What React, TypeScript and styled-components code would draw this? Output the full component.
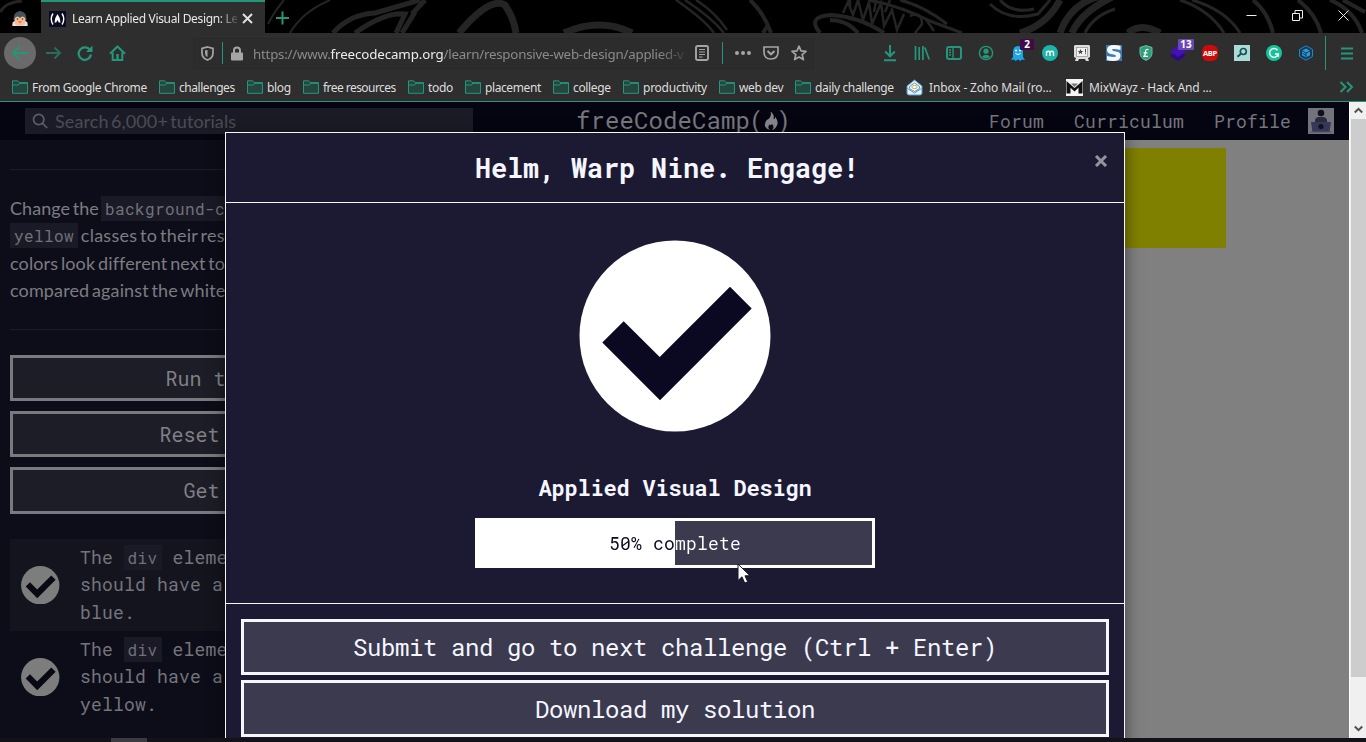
import React from "react";
import styled, { createGlobalStyle, css } from "styled-components";

const TEAL = "#25967a";
const MONO = `"Roboto Mono", "DejaVu Sans Mono", monospace`;
const UI = `"Noto Sans", "Open Sans", sans-serif`;

const GlobalStyle = createGlobalStyle`
  *, *::before, *::after { box-sizing: border-box; }
  html, body { margin: 0; padding: 0; background: #111; }
  body { overflow: hidden; }
`;

/* Monospace text set at a size and a whole-pixel character advance. */
const mono = (size: number, advance: number) => css`
  font-family: ${MONO};
  font-size: ${size}px;
  letter-spacing: ${(advance - size * 0.6001).toFixed(3)}px;
  white-space: pre;
`;

const Window = styled.div`
  width: 1366px;
  height: 742px;
  display: flex;
  flex-direction: column;
  overflow: hidden;
  background: #131217;
`;

/* ---------- title bar ---------- */
const TitleBar = styled.header`
  position: relative;
  flex: none;
  height: 33px;
  display: flex;
  background: #000;
  overflow: hidden;
  font-family: ${UI};
`;
const Doodle = styled.svg`
  position: absolute;
  inset: 0;
`;
const PinnedTab = styled.div`
  position: relative;
  width: 41px;
  padding: 10px 0 0 12px;
`;
const Tab = styled.div`
  position: relative;
  width: 224px;
  display: flex;
  align-items: center;
  padding: 2px 0 0 8px;
  background: #2e2e2e;
  border-top: 2px solid ${TEAL};
`;
const TabTitle = styled.span`
  width: 165px;
  margin: 0 5px 0 6px;
  white-space: nowrap;
  font-size: 12px;
  letter-spacing: -0.33px;
  color: #e8e8e8;
  mask-image: linear-gradient(90deg, #000 146px, rgba(0, 0, 0, 0.2) 164px);
`;
const NewTab = styled.div`
  position: relative;
  padding: 9px 0 0 10px;
`;
const WindowButtons = styled.div`
  position: relative;
  display: flex;
  margin-left: auto;
`;
const WindowButton = styled.div`
  width: 46px;
  display: flex;
  justify-content: center;
  padding-top: 10px;
`;

/* ---------- toolbar ---------- */
const Toolbar = styled.div`
  flex: none;
  height: 40px;
  display: flex;
  align-items: center;
  background: #2e2e2e;
  font-family: ${UI};
`;
const NavCell = styled.div<{ $w?: number; $round?: boolean }>`
  position: relative;
  width: ${(p) => p.$w ?? 32}px;
  height: 32px;
  flex: none;
  display: flex;
  align-items: center;
  justify-content: center;
  border-radius: ${(p) => (p.$round ? "50%" : "0")};
  background: ${(p) => (p.$round ? "#6a6a6a" : "transparent")};
`;
const UrlBar = styled.div`
  width: 621px;
  height: 31px;
  flex: none;
  display: flex;
  align-items: center;
  margin: 0 60px 0 58px;
  padding-left: 7px;
  border: 1px solid #292929;
  background: #2c2c2c;
`;
const Divider = styled.i<{ $h?: number; $m?: string }>`
  width: 1px;
  height: ${(p) => p.$h ?? 22}px;
  margin: ${(p) => p.$m ?? "0"};
  background: ${TEAL};
`;
const Url = styled.span`
  width: 432px;
  margin: 2px 10px 0 10px;
  white-space: nowrap;
  font-size: 13.3px;
  letter-spacing: -0.22px;
  color: #8b8b8b;
  mask-image: linear-gradient(90deg, #000 405px, rgba(0, 0, 0, 0.2) 432px);
  b {
    font-weight: 400;
    letter-spacing: -0.1px;
    color: #ececec;
  }
`;
const Badge = styled.span<{ $bg: string; $w: number }>`
  position: absolute;
  top: 2px;
  left: ${(p) => 32 - p.$w}px;
  width: ${(p) => p.$w}px;
  height: 11px;
  border-radius: 1px;
  background: ${(p) => p.$bg};
  color: #fff;
  font: 700 10px/11px ${UI};
  text-align: center;
`;

/* ---------- bookmarks ---------- */
const Bookmarks = styled.nav`
  flex: none;
  height: 29px;
  display: flex;
  align-items: center;
  padding: 0 0 0 12px;
  background: #2e2e2e;
  border-bottom: 1px solid ${TEAL};
  font: 12px ${UI};
  color: #dedede;
`;
const Bookmark = styled.span<{ $w: number; $gap: number; $ls: number }>`
  width: ${(p) => p.$w}px;
  flex: none;
  display: flex;
  align-items: center;
  gap: ${(p) => p.$gap}px;
  white-space: nowrap;
  letter-spacing: ${(p) => p.$ls}px;
`;
const Overflow = styled.span`
  margin-left: auto;
  padding-right: 12px;
  display: flex;
`;

/* ---------- page ---------- */
const Viewport = styled.div`
  flex: none;
  height: 636px;
  display: flex;
`;
const Page = styled.main`
  position: relative;
  width: 1349px;
  overflow: hidden;
  display: flex;
  flex-direction: column;
  background: #0d0d19;
`;
const SiteNav = styled.div`
  flex: none;
  height: 38px;
  display: flex;
  align-items: flex-start;
  padding: 6px 15px 0 25px;
  background: #050511;
  color: #76767d;
`;
const Search = styled.div`
  width: 448px;
  height: 26px;
  display: flex;
  align-items: center;
  gap: 7px;
  padding-left: 7px;
  background: #1b1b27;
  font: 18px Lato, sans-serif;
  color: #4b4b53;
  span {
    letter-spacing: 0.12px;
    word-spacing: -2.5px;
    margin-bottom: 1px;
  }
`;
const Logo = styled.div`
  display: flex;
  margin: -2px 0 0 103px;
  ${mono(24, 14.5)}
  line-height: 28px;
  color: #77777d;
`;
const LogoMark = styled.span`
  display: flex;
  width: 42px;
  margin-left: -1px;
  svg {
    margin: 5px -3px 0 -2px;
  }
`;
const NavLinks = styled.div`
  display: flex;
  gap: 30px;
  margin-left: auto;
  ${mono(18, 11)}
  line-height: 27px;
`;
const Avatar = styled.svg`
  margin-left: 17px;
`;
const Split = styled.div`
  flex: 1;
  display: flex;
  min-height: 0;
`;
const Lesson = styled.section`
  width: 478px;
  padding: 29px 0 0 10px;
`;
const Rule = styled.div`
  height: 1px;
  background: #1c1c28;
`;
const Instructions = styled.div`
  height: 159px;
  padding-top: 25px;
  font: 18px/27.4px Lato, sans-serif;
  letter-spacing: 0.13px;
  word-spacing: -2px;
  color: #7c7c81;
`;
const Line = styled.div<{ $ls?: number }>`
  height: 27.4px;
  white-space: nowrap;
  letter-spacing: ${(p) => p.$ls ?? 0.13}px;
`;
const Code = styled.code<{ $ml?: number }>`
  ${mono(16, 10)}
  display: inline-block;
  height: 25px;
  line-height: 25px;
  margin-left: ${(p) => p.$ml ?? 0}px;
  padding: 0 4px;
  background: #1a1a26;
  color: #717179;
  vertical-align: baseline;
`;
const Buttons = styled.div`
  display: flex;
  flex-direction: column;
  gap: 10px;
  padding: 25px 0;
`;
const LessonButton = styled.button<{ $h?: number }>`
  height: ${(p) => p.$h ?? 46}px;
  padding: 0 1px ${(p) => (p.$h ? 2 : 0)}px 0;
  border: 3px solid #79797f;
  border-radius: 0;
  background: #1d1d28;
  color: #808086;
  ${mono(20, 12)}
`;
const TestRow = styled.div<{ $tint?: boolean }>`
  height: 92px;
  display: flex;
  align-items: center;
  gap: 20.5px;
  padding: 0 0 0 11px;
  background: ${(p) => (p.$tint ? "#14141f" : "transparent")};
  ${mono(18, 11)}
  line-height: 27.5px;
  color: #75757b;
  svg {
    flex: none;
  }
`;
const Preview = styled.section`
  flex: 1;
  padding: 8px 0 0 548px;
  background: #808080;
`;
const YellowBox = styled.div`
  width: 200px;
  height: 100px;
  background: #808000;
`;

/* ---------- modal ---------- */
const Modal = styled.div`
  position: absolute;
  top: 30px;
  left: 225px;
  width: 900px;
  height: 640px;
  display: flex;
  flex-direction: column;
  background: #1c1a32;
  border: 1px solid #f5f5fa;
  box-shadow: 0 5px 15px rgba(0, 0, 0, 0.5);
  color: #f5f6ff;
`;
const ModalHeader = styled.div`
  height: 70px;
  display: flex;
  align-items: center;
  padding: 0 16px 0 249px;
  border-bottom: 1px solid #f5f5fa;
`;
const Title = styled.h2`
  margin: 0;
  ${mono(27, 16)}
  line-height: 36px;
  font-weight: 700;
`;
const Close = styled.div`
  display: flex;
  margin: -13px 0 0 auto;
`;
const ModalBody = styled.div`
  height: 401px;
  display: flex;
  flex-direction: column;
  align-items: center;
  padding-top: 37px;
  border-bottom: 1px solid #f5f5fa;
`;
const BlockName = styled.div`
  margin: 39px 0 13px;
  ${mono(22, 13)}
  line-height: 34px;
  font-weight: 700;
`;
const Progress = styled.div<{ $value: number }>`
  width: 400px;
  height: 50px;
  border: 3px solid #fff;
  padding-top: 1px;
  background: linear-gradient(90deg, #fff ${(p) => p.$value}%, #3b3a4f ${(p) => p.$value}%);
`;
const ProgressLabel = styled.div<{ $value: number }>`
  ${mono(18, 11)}
  line-height: 43px;
  text-align: center;
  color: transparent;
  background: linear-gradient(90deg, #0a0a23 ${(p) => p.$value}%, #fff ${(p) => p.$value}%);
  -webkit-background-clip: text;
  background-clip: text;
`;
const ModalFooter = styled.div`
  display: flex;
  flex-direction: column;
  gap: 5px;
  padding: 15px;
`;
const ModalButton = styled.button<{ $h: number }>`
  height: ${(p) => p.$h}px;
  padding: 0;
  border: 3px solid #f5f6ff;
  border-radius: 0;
  background: #3b3a4f;
  color: #f5f6ff;
  ${mono(24, 14)}
`;
const Pointer = styled.svg`
  position: absolute;
  left: 737px;
  top: 461px;
`;

/* ---------- scrollbar ---------- */
const ScrollBar = styled.div`
  width: 17px;
  display: flex;
  flex-direction: column;
  align-items: center;
  background: #f0f0f0;
  border-left: 1px solid #fff;
`;
const ScrollArrow = styled.div`
  height: 17px;
  display: flex;
  align-items: center;
`;
const Thumb = styled.div`
  width: 15px;
  height: 558px;
  margin-bottom: 43px;
  background: #cdcdcd;
`;
const TaskEdge = styled.div`
  flex: 1;
  padding-left: 111px;
  i {
    display: block;
    width: 36px;
    height: 4px;
    background: #3a3a3f;
  }
`;

const Passed = ({ size, disc, tick }: { size: number; disc: string; tick: string }) => (
  <svg width={size} height={size} viewBox="0 0 192 192">
    <circle cx="96" cy="96" r="95.5" fill={disc} />
    <path d="M23.3 102.6 44.7 81.3 80.7 117 151 46.8 172.7 68.4 81 160.3Z" fill={tick} />
  </svg>
);

const Folder = () => (
  <svg width="16" height="14" viewBox="0 0 16 14" fill="#24463f" stroke={TEAL}>
    <path d="M.5 13.3V.8h5.2l1.4 1.8h8.4v10.7Z" />
    <path d="M.5 5h6l1.2-1.5" fill="none" />
    <path d="M7 3.3h8.5" fill="none" />
  </svg>
);

const ZohoIcon = () => (
  <svg width="17" height="17" viewBox="0 0 17 17">
    <path d="M1 7 8.5 1 16 7v7q0 2-2 2H3q-2 0-2-2Z" fill="#e9f2f8" stroke="#4f9bc9" />
    <path d="M3.5 7.5 8.5 4l5 3.5v2l-5 3-5-3Z" fill="#fff" stroke="#4f9bc9" />
    <ellipse cx="8.5" cy="8" rx="2.7" ry="1.6" fill="none" stroke="#e0a33b" />
    <path d="m1.5 9.5 7 4.5 7-4.5" fill="none" stroke="#4f9bc9" />
  </svg>
);

const MixIcon = () => (
  <svg width="17" height="17" viewBox="0 0 17 17">
    <path d="M0 0h17v17H0Z" fill="#f4f4f4" />
    <path d="M.5 2 8.5 9l8-7v12.5h-4V8.7l-4 3.8-4-3.8v5.8h-4Z" fill="#111" />
    <path d="M5 4.5h7L8.5 8Z" fill="#777" />
  </svg>
);

const folders: [string, number, number][] = [
  ["From Google Chrome", 147, -0.35],
  ["challenges", 88, -0.45],
  ["blog", 56, -0.35],
  ["free resources", 105, -0.55],
  ["todo", 57, -0.35],
  ["placement", 88, -0.4],
  ["college", 70, -0.35],
  ["productivity", 96, -0.25],
  ["web dev", 76, -0.35],
  ["daily challenge", 111, -0.35],
];

const TitleDoodle = () => (
  <Doodle width="1366" height="33" viewBox="0 0 1366 33" fill="none" stroke="#242424">
    <path d="M0 12Q6 2 22 1" strokeWidth="3" />
    <path d="M333 33Q350 14 375 13L420 0M355 33Q385 12 405 14L396 33M415 12 402 33M425 0 412 14" strokeWidth="5" />
    <path d="M268 24q6-12 16-24M290 33Q302 12 330 0" strokeWidth="2" />
    <path d="M459 33Q490-4 505 5 514 18 516 33" strokeWidth="7" />
    <path d="M564 33Q600 17 632 33" strokeWidth="7" />
    <path d="M676 0Q705 20 714 33M685 0Q712 18 724 33M696 0Q715 12 727 30" strokeWidth="2.5" />
    <path d="M750 0Q764 13 771 33M763 33l5-8" strokeWidth="4" />
    <path d="M820 33Q806 16 832 15 860 17 884 33M830 20q17 0 28 13" strokeWidth="4" />
    <path d="M843 13 848 2 853 15 858 0 863 20 869 2 872 24 881 3 884 26 892 10 897 30 904 14M850 0v9M876 0l-2 12M890 0l-5 12M910 16q12-5 12 8l-7 9M925 18l9 13" strokeWidth="2.5" />
    <path d="M868 0Q898 5 930 21L962 33M900 0q24 6 47 24" strokeWidth="3" />
    <path d="M990 4Q1008 22 1038 14L1050 0M1000 0q12 14 34 9" strokeWidth="3" />
    <path d="M1020 33Q1047 25 1060 0M1060 33Q1070 4 1100-4M1072 33Q1080 13 1112-3" strokeWidth="7" />
    <path d="M1085 33Q1093 16 1115 9M1192 0q34 10 48 33M1180 0q30 10 44 33" strokeWidth="3" />
    <path d="M1128 33Q1141 22 1160 33" strokeWidth="7" />
    <path d="M1253 0Q1268 12 1273 33M1298 0Q1316 14 1321 33M1330 0q24 10 32 33M1343 0l22 12" strokeWidth="4" />
  </Doodle>
);

const stroke = { fill: "none", stroke: TEAL, strokeWidth: 2 };

const AbpDisc = styled.span`
  width: 16px;
  height: 16px;
  border-radius: 6px;
  background: #d00a0a;
  color: #fff;
  font: 700 7.5px/16px "Open Sans", sans-serif;
  letter-spacing: -0.3px;
  text-align: center;
`;

const Extensions = () => (
  <>
    <NavCell>
      <svg width="16" height="18" viewBox="0 0 16 18" {...stroke}>
        <path d="M8 1v11M3.2 7.5 8 12.3l4.8-4.8M2 16.3h12" />
      </svg>
    </NavCell>
    <NavCell>
      <svg width="16" height="16" viewBox="0 0 16 16" {...stroke}>
        <path d="M1.5 1v14M5.2 2v13M8.9 1v14M10.8 2.5l4.4 12" strokeWidth="1.7" />
      </svg>
    </NavCell>
    <NavCell>
      <svg width="16" height="14" viewBox="0 0 16 14" {...stroke}>
        <rect x="1" y="1" width="14" height="12" rx="2" />
        <path d="M7 1v12M3 4h2M3 6.5h2M3 9h2" strokeWidth="1.3" />
      </svg>
    </NavCell>
    <NavCell>
      <svg width="16" height="16" viewBox="0 0 16 16" {...stroke}>
        <circle cx="8" cy="8" r="6.6" strokeWidth="1.4" />
        <circle cx="8" cy="6.2" r="2.6" fill={TEAL} stroke="none" />
        <path d="M3.8 11.7q4.2-4 8.4 0-4.2 3.6-8.4 0Z" fill={TEAL} stroke="none" />
      </svg>
    </NavCell>
    <NavCell>
      <svg width="16" height="16" viewBox="0 0 16 16">
        <path d="M3 7q0-6 5-6t5 6v5l2 3-3-.5L10.5 16 8 14.5 5.5 16 4 14.5 1 15l2-3Z" fill="#1ea5e4" />
        <circle cx="6" cy="5.5" r="1" fill="#fff" />
        <circle cx="10" cy="5.5" r="1" fill="#fff" />
        <path d="M5.5 8.5q2.5 2 5 0" stroke="#fff" fill="none" />
      </svg>
      <Badge $bg="#3f0a47" $w={14}>2</Badge>
    </NavCell>
    <NavCell>
      <svg width="16" height="16" viewBox="0 0 16 16">
        <circle cx="8" cy="8" r="8" fill="#1cb5a8" />
        <path d="M4.5 11V6.5M4.5 8q0-1.7 1.7-1.7T8 8v3M8 8q0-1.7 1.8-1.7T11.5 8v3" stroke="#fff" strokeWidth="1.4" fill="none" />
      </svg>
    </NavCell>
    <NavCell>
      <svg width="16" height="16" viewBox="0 0 16 16">
        <path d="M1 0h14l1 1v11l-2 1 1 3h-3l-1-2H5l-1 2H1l1-3-2-1V1Z" fill="#dedede" />
        <rect x="2.5" y="2.5" width="11" height="9" fill="#f2f2f2" stroke="#999" strokeWidth=".8" />
        <path d="m6.5 4 .8 2h2l-1.6 1.3.6 2-1.8-1.2-1.8 1.2.6-2L3.7 6h2ZM11 4h1v3.400h-1ZM11 8.300h1v1h-1Z" fill="#444" />
      </svg>
    </NavCell>
    <NavCell>
      <svg width="16" height="16" viewBox="0 0 16 16">
        <path d="M0 0h16v16H0Z" fill="#3d7ab5" />
        <path d="M14.5 1v4Q6 3 6 4.700 6 6 10 6.500q4.500.5 4.500 4.300Q14.500 16 7 16 3 16 1 15v-4q9 2 9 0 0-1.400-4-1.800Q1 8.500 1 5 1 0 8 0q4 0 6.500 1Z" fill="#f5f8fb" />
      </svg>
    </NavCell>
    <NavCell>
      <svg width="14" height="16" viewBox="0 0 14 16">
        <path d="M7 .6 13 2.500V8q0 5-6 7.400Q1 13 1 8V2.500Z" fill="#2e9e7d" stroke="#6fbfa5" />
        <path d="M9.500 4.800Q7 3.500 6.600 6L6 10q-.3 1.200-1.700 1.300H9M4.600 7.800h3.800" stroke="#fff" strokeWidth="1.2" fill="none" />
      </svg>
    </NavCell>
    <NavCell>
      <svg width="16" height="16" viewBox="0 0 16 16">
        <path d="m8 6 8 4.500L8 16 0 10.500Z" fill="#2c0a86" />
        <path d="m8 1 8 5-8 6-8-6Z" fill="#4511b5" />
      </svg>
      <Badge $bg="#6b46b8" $w={16}>13</Badge>
    </NavCell>
    <NavCell>
      <AbpDisc>ABP</AbpDisc>
    </NavCell>
    <NavCell>
      <svg width="16" height="16" viewBox="0 0 16 16">
        <path d="M0 0h16v16H0Z" fill="#a9dcd6" />
        <circle cx="9.3" cy="6.5" r="3" fill="none" stroke="#1c4f5a" strokeWidth="1.7" />
        <path d="m7 8.800-3.500 3" stroke="#1c4f5a" strokeWidth="2" />
      </svg>
    </NavCell>
    <NavCell>
      <svg width="16" height="16" viewBox="0 0 16 16">
        <circle cx="8" cy="8" r="8" fill="#15c39a" />
        <path d="M11.500 5.200A4.400 4.400 0 1 0 12.300 9H9M12.300 8.500v3.300" fill="none" stroke="#fff" strokeWidth="1.5" />
      </svg>
    </NavCell>
    <NavCell>
      <svg width="16" height="16" viewBox="0 0 16 16">
        <path d="m8 .8 6.500 3.600v7.200L8 15.200l-6.500-3.600V4.400Z" fill="#173a55" stroke="#2187c4" />
        <path d="m8 3.500 4 2.200v4.600l-4 2.200-4-2.200V5.700Z" fill="#2b9be0" />
        <path d="M4 6 8 8l4-2M8 8v4M4.500 8.500 8 10.300" stroke="#173a55" fill="none" />
      </svg>
    </NavCell>
  </>
);

export default function App() {
  return (
    <Window>
      <GlobalStyle />
      <TitleBar>
        <TitleDoodle />
        <PinnedTab>
          <svg width="16" height="16" viewBox="0 0 16 16">
            <path d="M1.500 9Q1 1 8 0q7 1 6.500 9Z" fill="#46535c" />
            <path d="M.5 15q-1-4 2-5h11q3 1 2 5Z" fill="#e9e3df" />
            <path d="M3 7q2.500-3 5 0 2.500-3 5 0 1.500 5-1 7-4 2-8 0-2.500-2-1-7Z" fill="#f5bd98" />
            <circle cx="5.5" cy="8" r=".8" fill="#333" />
            <circle cx="10.5" cy="8" r=".8" fill="#333" />
            <path d="M6 10h4l-2 2.500Z" fill="#e8792f" />
          </svg>
        </PinnedTab>
        <Tab>
          <svg width="17" height="16" viewBox="0 0 17 16">
            <path d="M0 0h17v16H0Z" fill="#0a0a23" />
            <path d="M4 2.500Q.5 8 4 13.500M13 2.500q3.500 5.500 0 11" stroke="#fff" strokeWidth="1.4" fill="none" />
            <path d="M8.500 3q3 4 3 8.500H9.800L8.500 9l-1.300 2.500H5.500Q5.500 7 8.500 3Z" fill="#fff" />
          </svg>
          <TabTitle>Learn Applied Visual Design: Le</TabTitle>
          <svg width="11" height="11" viewBox="0 0 11 11" stroke="#e0e0e0" strokeWidth="2">
            <path d="m1 1 9 9M10 1l-9 9" />
          </svg>
        </Tab>
        <NewTab>
          <svg width="15" height="15" viewBox="0 0 15 15" {...stroke}>
            <path d="M7.500.5v13M1 7h13" />
          </svg>
        </NewTab>
        <WindowButtons>
          <WindowButton>
            <svg width="11" height="11" viewBox="0 0 11 11" stroke="#eee">
              <path d="M.5 5.500h10" />
            </svg>
          </WindowButton>
          <WindowButton>
            <svg width="11" height="11" viewBox="0 0 11 11" stroke="#eee" fill="none">
              <path d="M.5 3.500h7v7h-7ZM3 3V.5h7.500V8H8" />
            </svg>
          </WindowButton>
          <WindowButton>
            <svg width="11" height="11" viewBox="0 0 11 11" stroke="#eee">
              <path d="m.5.5 10 10M10.500.5l-10 10" />
            </svg>
          </WindowButton>
        </WindowButtons>
      </TitleBar>

      <Toolbar>
        <NavCell $w={4} />
        <NavCell $round>
          <svg width="18" height="16" viewBox="0 0 18 16" {...stroke}>
            <path d="M17 8H2M8.500 1.500 2 8l6.500 6.500" />
          </svg>
        </NavCell>
        <NavCell $w={35}>
          <svg width="16" height="14" viewBox="0 0 16 14" {...stroke} opacity=".6">
            <path d="M0 7h14M8.500 1.500 14 7l-5.500 5.500" />
          </svg>
        </NavCell>
        <NavCell $w={28}>
          <svg width="16" height="16" viewBox="0 0 16 16" {...stroke}>
            <path d="M13.200 5.500A6.200 6.200 0 1 0 14 9.500" strokeWidth="2.3" />
            <path d="M15.500.5V7H9Z" fill={TEAL} stroke="none" />
          </svg>
        </NavCell>
        <NavCell $w={36}>
          <svg width="17" height="17" viewBox="0 0 17 17" {...stroke}>
            <path d="m1 8.800 7.500-7.300L16 8.800" />
            <path d="M3.700 7.500V15h9.600V7.500" />
            <path d="M8.500 9v6" strokeWidth="2.5" />
          </svg>
        </NavCell>
        <UrlBar>
          <svg width="13" height="15" viewBox="0 0 13 15" fill="none" stroke="#a5a5a5" strokeWidth="1.7">
            <path d="M6.500 1 12 2.500V7q0 5-5.500 7Q1 12 1 7V2.500Z" />
            <path d="M6.500 4v7Q4 10 4 7V4.500Z" fill="#a5a5a5" stroke="none" />
          </svg>
          <Divider $m="0 8px 0 8px" />
          <svg width="12" height="15" viewBox="0 0 12 15">
            <path d="M3 7V4.500a3 3 0 0 1 6 0V7" fill="none" stroke="#a5a5a5" strokeWidth="2" />
            <rect y="6.5" width="12" height="8" rx="1" fill="#a5a5a5" />
          </svg>
          <Url>
            https://www.<b>freecodecamp.org</b>/learn/responsive-web-design/applied-v
          </Url>
          <svg width="14" height="16" viewBox="0 0 14 16" fill="none" stroke="#a5a5a5">
            <rect x="1" y="1" width="12" height="14" rx="1.5" strokeWidth="1.9" />
            <path d="M4 4.500h6M4 7h6M4 9.500h6M4 12h3.500" />
          </svg>
          <Divider $m="0 12px 0 13px" />
          <svg width="16" height="4" viewBox="0 0 16 4" fill="#a5a5a5">
            <circle cx="2" cy="2" r="2" />
            <circle cx="8" cy="2" r="2" />
            <circle cx="14" cy="2" r="2" />
          </svg>
          <Divider $h={0} $m="0 5px 0 6px" />
          <svg width="16" height="14" viewBox="0 0 16 14" fill="none" stroke="#a5a5a5" strokeWidth="2">
            <path d="M1 1h14v5q0 7-7 7T1 6Z" strokeWidth="1.7" />
            <path d="M4.500 5 8 8.300 11.500 5" />
          </svg>
          <Divider $h={0} $m="0 5px 0 6px" />
          <svg width="16" height="16" viewBox="0 0 16 16" fill="none" stroke="#a5a5a5" strokeWidth="1.7" strokeLinejoin="round">
            <path d="m8 1.200 2 4.600 5 .5-3.800 3.300 1.200 5L8 12l-4.400 2.600 1.200-5L1 6.300l5-.5Z" />
          </svg>
        </UrlBar>
        <Extensions />
        <Divider $h={34} $m="0 14px 0 3px" />
        <svg width="14" height="13" viewBox="0 0 14 13" {...stroke}>
          <path d="M1 1.500h12M1 6.500h12M1 11.500h12" />
        </svg>
      </Toolbar>

      <Bookmarks>
        {folders.map(([name, w, ls]) => (
          <Bookmark key={name} $w={w} $gap={4} $ls={ls}>
            <Folder />
            {name}
          </Bookmark>
        ))}
        <Bookmark $w={160} $gap={6} $ls={-0.16}>
          <ZohoIcon />
          Inbox - Zoho Mail (ro...
        </Bookmark>
        <Bookmark $w={160} $gap={6} $ls={-0.15}>
          <MixIcon />
          MixWayz - Hack And ...
        </Bookmark>
        <Overflow>
          <svg width="15" height="12" viewBox="0 0 15 12" {...stroke}>
            <path d="m1.500 1 5 5-5 5M8 1l5 5-5 5" />
          </svg>
        </Overflow>
      </Bookmarks>

      <Viewport>
        <Page>
          <SiteNav>
            <Search>
              <svg width="16" height="16" viewBox="0 0 16 16" fill="none" stroke="#5d5d65" strokeWidth="1.7">
                <circle cx="6.7" cy="6.5" r="5.2" />
                <path d="m10.500 10.300 4.700 4.700" />
              </svg>
              <span>Search 6,000+ tutorials</span>
            </Search>
            <Logo>
              freeCodeCamp
              <LogoMark>
                (
                <svg width="18" height="20" viewBox="0 0 18 20" fill="#85858b">
                  <path d="M8.500.5Q13 4 11.500 8q2 .5 1.500-2.500Q18 12 13.500 17q-2 2-3.500 2 3-3 0-6-1.500 2-2.500.5Q5 16.500 8 19 1 17 3.500 11 4.500 8.500 6.500 8 10 5 8.500.5Z" />
                </svg>
                )
              </LogoMark>
            </Logo>
            <NavLinks>
              <span>Forum</span>
              <span>Curriculum</span>
              <span>Profile</span>
            </NavLinks>
            <Avatar width="26" height="26" viewBox="0 0 26 26">
              <path d="M0 0h26v26H0Z" fill="#73737c" />
              <circle cx="13" cy="5" r="3.3" fill="#11111b" />
              <path d="M7 17v-5q1-3 4-3h4q3 0 4 3v5Z" fill="#2a2a3f" />
              <path d="M3 14h20l-1.500 10h-17Z" fill="#37375a" />
              <circle cx="13" cy="18.5" r="2.6" fill="#11111b" />
              <path d="M2 24h22" stroke="#55556a" />
            </Avatar>
          </SiteNav>

          <Split>
            <Lesson>
              <Rule />
              <Instructions>
                <Line $ls={0.05}>Change the <Code $ml={-0.5}>background-color</Code></Line>
                <Line $ls={0.24}><Code>yellow</Code> classes to their respective</Line>
                <Line>colors look different next to each</Line>
                <Line>compared against the white</Line>
              </Instructions>
              <Rule />
              <Buttons>
                <LessonButton>Run the Tests</LessonButton>
                <LessonButton>Reset All Code</LessonButton>
                <LessonButton $h={47}>Get a Hint</LessonButton>
              </Buttons>
              <TestRow $tint>
                <Passed size={38.5} disc="#7d7d7d" tick="#090914" />
                <div>
                  The <Code $ml={-0.5}>div</Code> element<br />should have a<br />blue.
                </div>
              </TestRow>
              <TestRow>
                <Passed size={38.5} disc="#7d7d7d" tick="#090914" />
                <div>
                  The <Code $ml={-0.5}>div</Code> element<br />should have a<br />yellow.
                </div>
              </TestRow>
            </Lesson>
            <Preview>
              <YellowBox />
            </Preview>
          </Split>

          <Modal>
            <ModalHeader>
              <Title>Helm, Warp Nine. Engage!</Title>
              <Close>
                <svg width="14" height="12" viewBox="0 0 14 12" stroke="#9494a0" strokeWidth="3">
                  <path d="m2 1 10 10M12 1 2 11" />
                </svg>
              </Close>
            </ModalHeader>
            <ModalBody>
              <Passed size={192} disc="#fff" tick="#0b0821" />
              <BlockName>Applied Visual Design</BlockName>
              <Progress $value={50}>
                <ProgressLabel $value={50}>50% complete</ProgressLabel>
              </Progress>
            </ModalBody>
            <ModalFooter>
              <ModalButton $h={56}>Submit and go to next challenge (Ctrl + Enter)</ModalButton>
              <ModalButton $h={57}>Download my solution</ModalButton>
            </ModalFooter>
          </Modal>
          <Pointer width="14" height="22" viewBox="0 0 14 22">
            <path d="M1 1v16.500l4-3.700 2.700 6.300 3-1.300L8 12.800h5Z" fill="#fff" stroke="#15142a" />
          </Pointer>
        </Page>
        <ScrollBar>
          <ScrollArrow>
            <svg width="9" height="7" viewBox="0 0 9 7" {...stroke} stroke="#505050">
              <path d="M.8 5.500 4.500 1.800l3.700 3.700" />
            </svg>
          </ScrollArrow>
          <Thumb />
          <ScrollArrow>
            <svg width="9" height="7" viewBox="0 0 9 7" {...stroke} stroke="#505050">
              <path d="M.8 1.500 4.500 5.200l3.700-3.700" />
            </svg>
          </ScrollArrow>
        </ScrollBar>
      </Viewport>
      <TaskEdge>
        <i />
      </TaskEdge>
    </Window>
  );
}
